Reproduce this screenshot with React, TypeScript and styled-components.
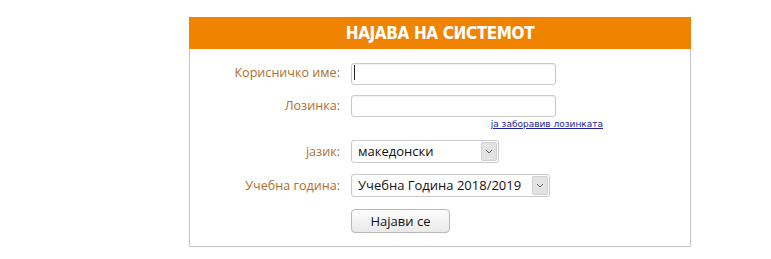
import styled, { createGlobalStyle } from 'styled-components'

const GlobalStyle = createGlobalStyle`
  html, body {
    margin: 0;
    padding: 0;
    background: #fff;
  }
  body {
    font-family: 'Open Sans', 'DejaVu Sans', sans-serif;
  }
`

const Page = styled.div`
  padding: 17px 0 0 189px;
`

const Panel = styled.div`
  width: 500px;
  border: 1px solid #c4c4c4;
  border-top: none;
  background: #fff;
  padding-bottom: 13px;
`

const Header = styled.div`
  height: 32px;
  margin: 0 -1px;
  background: #f08300;
  color: #fff;
  font-family: 'DejaVu Sans Condensed', 'DejaVu Sans', sans-serif;
  font-weight: bold;
  font-size: 17px;
  letter-spacing: -0.4px;
  display: flex;
  align-items: center;
  justify-content: center;
`

const Form = styled.div`
  display: flex;
  flex-direction: column;
  padding-top: 12px;
`

const Row = styled.div<{ $gap?: number }>`
  display: flex;
  align-items: center;
  margin-top: ${p => p.$gap ?? 0}px;
`

const Label = styled.label`
  width: 150px;
  margin-right: 11px;
  text-align: right;
  font-size: 12.6px;
  color: #ad6e2e;
`

const FieldWrap = styled.div`
  position: relative;
`

const TextInput = styled.input`
  box-sizing: border-box;
  width: 205px;
  height: 22px;
  border: 1px solid #c9c9c9;
  border-radius: 3px;
  box-shadow: inset 0 1px 2px rgba(0, 0, 0, 0.06);
  outline: none;
  padding: 0 4px;
  font-size: 13px;
`

const Caret = styled.span`
  position: absolute;
  left: 3px;
  top: 4px;
  width: 1px;
  height: 15px;
  background: #222;
`

const ForgotRow = styled.div`
  display: flex;
  justify-content: flex-end;
  width: 413px;
  margin-top: 2px;
`

const ForgotLink = styled.a`
  font-family: 'DejaVu Sans', sans-serif;
  font-size: 9px;
  color: #22229a;
  text-decoration: underline;
`

const SelectBox = styled.div<{ $width: number }>`
  box-sizing: border-box;
  position: relative;
  width: ${p => p.$width}px;
  height: 23px;
  border: 1px solid #c9c9c9;
  border-radius: 3px;
  display: flex;
  align-items: center;
  background: #fff;
`

const SelectText = styled.span`
  flex: 1;
  padding-left: 6px;
  font-size: 13px;
  color: #111;
  white-space: nowrap;
`

const ArrowBox = styled.span`
  box-sizing: border-box;
  width: 16px;
  align-self: stretch;
  margin: 1px;
  background: #e3e3e3;
  border: 1px solid #cfcfcf;
  border-radius: 2px;
  display: flex;
  align-items: center;
  justify-content: center;
`

const SubmitButton = styled.button`
  box-sizing: border-box;
  width: 99px;
  height: 24px;
  border: 1px solid #b9b9b9;
  border-radius: 4px;
  background: linear-gradient(#fdfdfd, #e9e9e9);
  font-family: 'Open Sans', 'DejaVu Sans', sans-serif;
  font-size: 13px;
  color: #111;
  padding: 0;
`

function Chevron() {
  return (
    <svg width="8" height="5" viewBox="0 0 8 5">
      <path d="M1 1 L4 4 L7 1" fill="none" stroke="#666" strokeWidth="1" />
    </svg>
  )
}

export default function App() {
  return (
    <>
      <GlobalStyle />
      <Page>
        <Panel>
          <Header>НАЈАВА НА СИСТЕМОТ</Header>
          <Form>
            <Row>
              <Label>Корисничко име:</Label>
              <FieldWrap>
                <TextInput type="text" />
                <Caret />
              </FieldWrap>
            </Row>
            <Row $gap={10}>
              <Label>Лозинка:</Label>
              <TextInput type="password" />
            </Row>
            <ForgotRow>
              <ForgotLink href="#">ја заборавив лозинката</ForgotLink>
            </ForgotRow>
            <Row $gap={11}>
              <Label>јазик:</Label>
              <SelectBox $width={148}>
                <SelectText>македонски</SelectText>
                <ArrowBox><Chevron /></ArrowBox>
              </SelectBox>
            </Row>
            <Row $gap={11}>
              <Label>Учебна година:</Label>
              <SelectBox $width={199}>
                <SelectText>Учебна Година 2018/2019</SelectText>
                <ArrowBox><Chevron /></ArrowBox>
              </SelectBox>
            </Row>
            <Row $gap={12}>
              <Label />
              <SubmitButton>Најави се</SubmitButton>
            </Row>
          </Form>
        </Panel>
      </Page>
    </>
  )
}
